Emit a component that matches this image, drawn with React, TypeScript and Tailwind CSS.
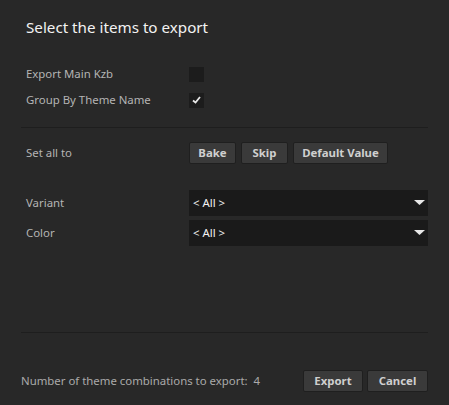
import type { ReactNode } from 'react'

const font = { fontFamily: "'Noto Sans', 'Open Sans', sans-serif" }

function Checkbox({ checked }: { checked?: boolean }) {
  return (
    <span className="flex h-[15px] w-[15px] items-center justify-center bg-[#1c1c1c]">
      {checked && (
        <svg width="9" height="8" viewBox="0 0 9 8">
          <path d="M1 4.5 L3.5 6.5 L8 1" fill="none" stroke="#e8e8e8" strokeWidth="1.8" />
        </svg>
      )}
    </span>
  )
}

function Row({ label, children, className = 'h-[26px]' }: { label: string; children: ReactNode; className?: string }) {
  return (
    <div className={`flex items-center ${className}`}>
      <span className="w-[168px] shrink-0 pl-[5px] text-[11.4px] text-[#b4b4b4]">{label}</span>
      {children}
    </div>
  )
}

function Btn({ children, w }: { children: ReactNode; w: string }) {
  return (
    <button className={`flex h-[22px] ${w} items-center justify-center rounded-[2px] border border-[#1f1f1f] bg-[#3a3a3a] text-[11.4px] font-bold text-[#cfcfcf]`}>
      {children}
    </button>
  )
}

function Dropdown() {
  return (
    <div className="flex h-[26px] w-[239px] items-center justify-between bg-[#1a1a1a] pl-[4px] pr-[3px]">
      <span className="text-[11.4px] text-[#f2f2f2]">&lt; All &gt;</span>
      <svg width="11" height="6" viewBox="0 0 11 6">
        <path d="M0 0 H11 L5.5 5 Z" fill="#e8e8e8" />
      </svg>
    </div>
  )
}

export default function App() {
  return (
    <div className="flex h-[405px] w-[449px] flex-col bg-[#282828] px-[21px]" style={font}>
      <h1 className="mt-[16px] pl-[5px] text-[15.2px] leading-[22px] text-[#f2f2f2]">Select the items to export</h1>

      <div className="mt-[23px]">
        <Row label="Export Main Kzb">
          <Checkbox />
        </Row>
        <Row label="Group By Theme Name">
          <Checkbox checked />
        </Row>
      </div>

      <div className="mt-[14px] h-px bg-[#1e1e1e]" />

      <Row label="Set all to" className="mt-[14px] h-[22px]">
        <div className="flex">
          <Btn w="w-[47px]">Bake</Btn>
          <div className="w-[5px]" />
          <Btn w="w-[47px]">Skip</Btn>
          <div className="w-[5px]" />
          <Btn w="w-[95px]">Default Value</Btn>
        </div>
      </Row>

      <div className="mt-[26px] flex flex-col gap-[4px]">
        <Row label="Variant">
          <Dropdown />
        </Row>
        <Row label="Color">
          <Dropdown />
        </Row>
      </div>

      <div className="mt-[86px] h-px bg-[#1e1e1e]" />

      <div className="mt-[37px] flex h-[22px] items-center justify-between">
        <span className="whitespace-pre text-[11.4px] text-[#aaaaaa]">Number of theme combinations to export:  4</span>
        <div className="flex gap-[4px]">
          <Btn w="w-[60px]">Export</Btn>
          <Btn w="w-[61px]">Cancel</Btn>
        </div>
      </div>
    </div>
  )
}
